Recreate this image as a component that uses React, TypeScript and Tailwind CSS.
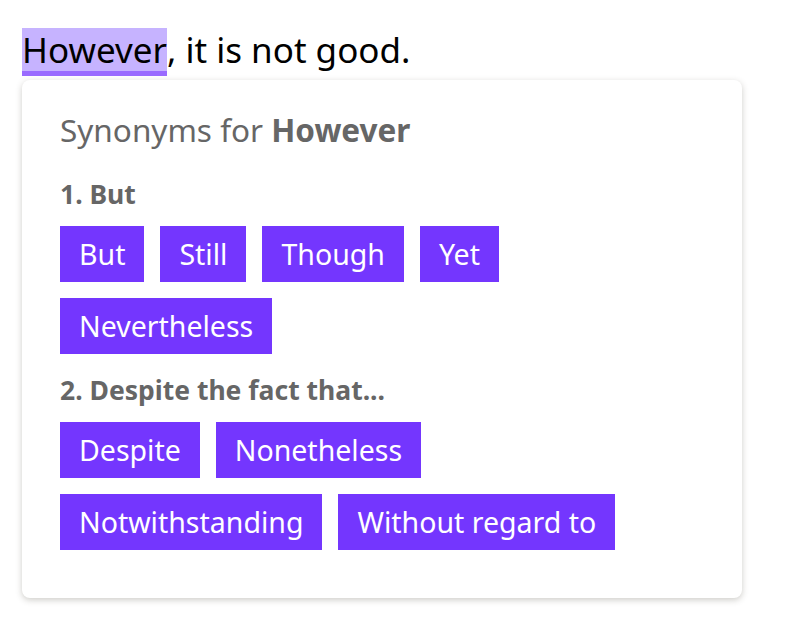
import React from 'react';

const groups = [
    { title: '1. But', words: ['But', 'Still', 'Though', 'Yet', 'Nevertheless'], gap: 'mt-[26px]' },
    { title: '2. Despite the fact that...', words: ['Despite', 'Nonetheless', 'Notwithstanding', 'Without regard to'], gap: 'mt-[19px]' },
];

const Chip: React.FC<{ word: string }> = ({ word }) => (
    <span className="inline-flex items-center h-[56px] px-[19px] bg-[#7436fe] text-white text-[28.5px] leading-none">
        {word}
    </span>
);

export default function App() {
    return (
        <div className="min-h-screen bg-white px-[22px] pt-[28px] font-['Noto_Sans',sans-serif]">
            <p className="text-[35px] leading-[43px] text-black">
                <span className="inline-block leading-[43px] bg-[#c6b3ff] border-b-[5px] border-[#9a6bff]">However</span>, it is not good.
            </p>

            <div className="mt-[4px] w-[720px] rounded-lg bg-white shadow-[0_2px_6px_rgba(60,55,40,0.25)] pl-[38px] pr-[70px] pt-[29px] pb-[48px]">
                <h3 className="text-[31.5px] leading-[42px] text-[#666]">
                    Synonyms for <span className="font-bold">However</span>
                </h3>

                {groups.map(g => (
                    <div key={g.title} className={g.gap}>
                        <p className="text-[26.5px] leading-[34px] font-bold text-[#666]">{g.title}</p>
                        <div className="mt-[15px] flex flex-wrap gap-x-[16px] gap-y-[16px]">
                            {g.words.map(w => <Chip key={w} word={w} />)}
                        </div>
                    </div>
                ))}
            </div>
        </div>
    );
}
